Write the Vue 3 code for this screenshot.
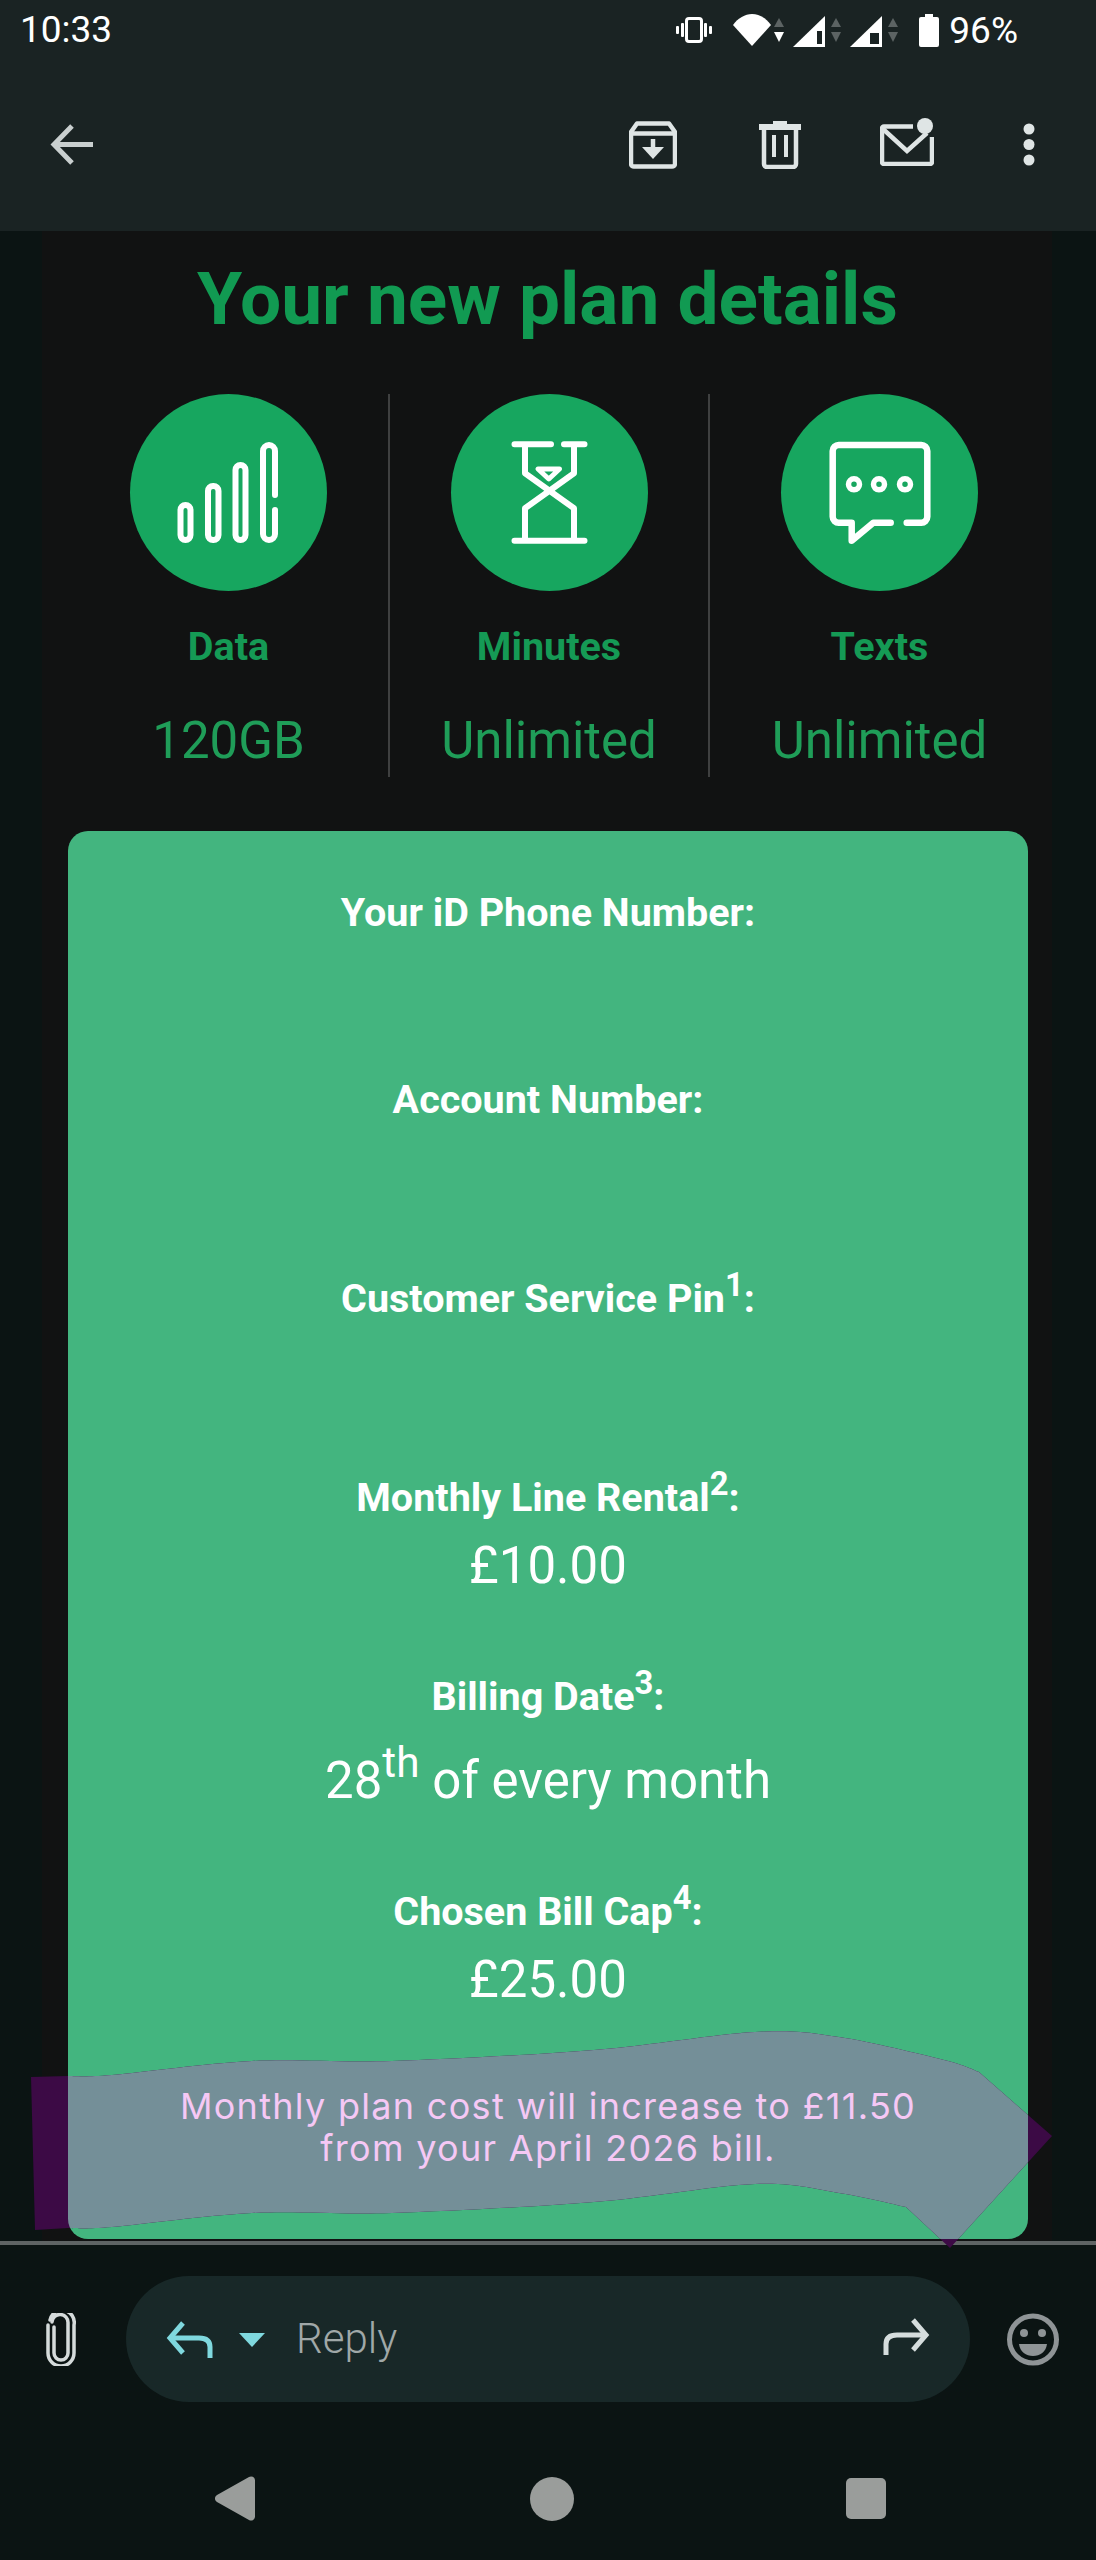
<template>
  <div class="screen">
    <header class="appbar">
      <div class="status">
        <span class="time">10:33</span>
        <div class="status-icons">
          <svg class="ic-vibrate" width="36" height="26" viewBox="0 0 36 26" fill="#fff">
            <rect x="10.500" y="1.500" width="15" height="23" rx="2.500" fill="none" stroke="#fff" stroke-width="3" />
            <rect x="5" y="6" width="3" height="14" rx="1" />
            <rect x="28" y="6" width="3" height="14" rx="1" />
            <rect x="0" y="9" width="3" height="8" rx="1" />
            <rect x="33" y="9" width="3" height="8" rx="1" />
          </svg>
          <svg class="ic-wifi" width="38" height="32" viewBox="0 0 38 32" fill="#fff">
            <path d="M0 11C5 4 12 0 19 0s14 4 19 11L19 32z" />
          </svg>
          <svg class="ic-updown first" width="10" height="24" viewBox="0 0 10 24">
            <path d="M5 0l5 9H0z" fill="#5c6363" />
            <path d="M0 14h10l-5 10z" fill="#fff" />
          </svg>
          <svg class="ic-signal" width="32" height="31" viewBox="0 0 32 31">
            <path d="M0 31L32 0v31z" fill="#fff" />
            <path d="M24 15h5v13h-5z" fill="#1a2323" />
          </svg>
          <svg class="ic-updown" width="10" height="24" viewBox="0 0 10 24">
            <path d="M5 0l5 9H0z" fill="#5c6363" />
            <path d="M0 14h10l-5 10z" fill="#5c6363" />
          </svg>
          <svg class="ic-signal" width="32" height="31" viewBox="0 0 32 31">
            <path d="M0 31L32 0v31z" fill="#fff" />
            <path d="M20 17h9v11h-9z" fill="#1a2323" />
          </svg>
          <svg class="ic-updown" width="10" height="24" viewBox="0 0 10 24">
            <path d="M5 0l5 9H0z" fill="#5c6363" />
            <path d="M0 14h10l-5 10z" fill="#5c6363" />
          </svg>
          <svg class="ic-battery" width="20" height="33" viewBox="0 0 20 33" fill="#fff">
            <path d="M6 0h8v3h4a2 2 0 0 1 2 2v26a2 2 0 0 1-2 2H2a2 2 0 0 1-2-2V5a2 2 0 0 1 2-2h4z" />
          </svg>
          <span class="battery-text">96%</span>
        </div>
      </div>
      <div class="toolbar">
        <svg width="43" height="41" viewBox="0 0 43 41" fill="none" stroke="#c9cfcf" stroke-width="5">
          <path d="M43 20.500H5M22 2L4 20.500 22 39" />
        </svg>
        <div class="tools">
          <svg class="tool-archive" width="48" height="48" viewBox="0 0 48 48" fill="none" stroke="#dfe5e5" stroke-width="4.500">
            <path d="M8 2.500h32l6 8.500v32a3 3 0 0 1-3 2.500H5a3 3 0 0 1-3-2.500V11z" stroke-linejoin="round" />
            <path d="M3 12.500h42" />
            <path d="M24 18v10" />
            <path d="M13 26h22L24 38z" fill="#dfe5e5" stroke="none" />
          </svg>
          <svg class="tool-trash" width="42" height="48" viewBox="0 0 42 48" fill="none" stroke="#dfe5e5" stroke-width="4.500">
            <path d="M14 0h14v3h14v6H0V3h14z" fill="#dfe5e5" stroke="none" />
            <path d="M5 8v35a3 3 0 0 0 3 3h26a3 3 0 0 0 3-3V8" />
            <path d="M15 14v22M27 14v22" stroke-width="4" />
          </svg>
          <svg class="tool-mail" width="54" height="48" viewBox="0 0 54 48" fill="none" stroke="#dfe5e5" stroke-width="4.500">
            <path d="M33 8.500H4a2 2 0 0 0-2 2V44a2 2 0 0 0 2 2h46a2 2 0 0 0 2-2V19" />
            <path d="M3 11l24 22 20-18" />
            <circle cx="45" cy="8" r="8" fill="#dfe5e5" stroke="none" />
          </svg>
          <svg class="tool-more" width="12" height="43" viewBox="0 0 12 43" fill="#dfe5e5">
            <circle cx="6" cy="6" r="5.500" />
            <circle cx="6" cy="21.500" r="5.500" />
            <circle cx="6" cy="37" r="5.500" />
          </svg>
        </div>
      </div>
    </header>

    <main class="mail">
      <h1 class="title">Your new plan details</h1>

      <section class="stats">
        <div class="stat">
          <div class="badge">
            <svg width="197" height="197" viewBox="0 0 197 197" fill="none" stroke="#fff" stroke-width="6">
              <rect x="50.500" y="111" width="10" height="35" rx="5" />
              <rect x="78" y="92" width="10.500" height="54" rx="5" />
              <rect x="105.500" y="71" width="10" height="75" rx="5" />
              <path d="M145 101V57a6 6 0 0 0-12 0v83a6 6 0 0 0 12 0v-24" stroke-linecap="round" />
            </svg>
          </div>
          <div class="stat-label">Data</div>
          <div class="stat-value">120GB</div>
        </div>
        <div class="stat">
          <div class="badge">
            <svg width="197" height="197" viewBox="0 0 197 197" fill="none" stroke="#fff" stroke-width="6" stroke-linecap="round" stroke-linejoin="round">
              <path d="M63.500 50.300H100M113 50.300h20.500M63.500 146.700h70" />
              <path d="M74 51v28.300L123 114.300V146M123 51v28.300L74 114.300V146" />
              <path d="M87 75h21.500L97.800 85z" stroke-width="5" />
            </svg>
          </div>
          <div class="stat-label">Minutes</div>
          <div class="stat-value">Unlimited</div>
        </div>
        <div class="stat">
          <div class="badge">
            <svg width="197" height="197" viewBox="0 0 197 197" fill="none" stroke="#fff" stroke-width="6.500" stroke-linecap="round" stroke-linejoin="round">
              <path d="M125.700 128.700H140a6 6 0 0 0 6.300-6V57a6 6 0 0 0-6.300-6H58a6 6 0 0 0-6.300 6v65.700a6 6 0 0 0 6.300 6h12.700v18L92.300 128.700h17.400" />
              <circle cx="73" cy="90.300" r="5.500" stroke-width="5.500" />
              <circle cx="98" cy="90.300" r="5.500" stroke-width="5.500" />
              <circle cx="124" cy="90.300" r="5.500" stroke-width="5.500" />
            </svg>
          </div>
          <div class="stat-label">Texts</div>
          <div class="stat-value">Unlimited</div>
        </div>
      </section>

      <section class="card">
        <div v-for="row in rows" :key="row.label" class="row" :class="row.cls">
          <div class="row-label">{{ row.label }}<sup v-if="row.note">{{ row.note }}</sup>:</div>
          <div class="row-value">{{ row.value }}<sup v-if="row.ord">{{ row.ord }}</sup>{{ row.rest }}</div>
        </div>
        <p class="notice">Monthly plan cost will increase to £11.50<br />from your April 2026 bill.</p>
      </section>
    </main>

    <footer class="bottom">
      <div class="composer">
        <svg class="clip" width="30" height="53" viewBox="0 0 30 53" fill="none" stroke="#d5dbdb" stroke-width="3.500" stroke-linecap="round">
          <path d="M8 14v26a7 7 0 0 0 14 0V10A8 8 0 0 0 6 9" />
          <path d="M2 12v28a13 13 0 0 0 26 0V12A12 12 0 0 0 4 7" />
        </svg>
        <div class="pill">
          <svg width="47" height="37" viewBox="0 0 47 37" fill="none" stroke="#7fd8de" stroke-width="5">
            <path d="M17 2L4 17l13 15" />
            <path d="M4 17h29q11 0 11 9v11" />
          </svg>
          <svg class="caret" width="26" height="14" viewBox="0 0 26 14" fill="#7fd8de">
            <path d="M0 0h26L13 14z" />
          </svg>
          <span class="reply">Reply</span>
          <svg class="forward" width="47" height="37" viewBox="0 0 47 37" fill="none" stroke="#d5dddd" stroke-width="5">
            <path d="M30 2l13 15-13 15" />
            <path d="M43 17H14Q3 17 3 26v11" />
          </svg>
        </div>
        <svg class="emoji" width="52" height="53" viewBox="0 0 52 53">
          <circle cx="26" cy="26.500" r="23.500" fill="none" stroke="#8f9496" stroke-width="5" />
          <circle cx="17" cy="20" r="4" fill="#8f9496" />
          <circle cx="35" cy="20" r="4" fill="#8f9496" />
          <path d="M12 31h28c-1 8-7 12-14 12s-13-4-14-12z" fill="#8f9496" />
        </svg>
      </div>
      <nav class="sysnav">
        <svg width="40" height="45" viewBox="0 0 40 45" fill="#9a9d9b">
          <path d="M34 1a4 4 0 0 1 6 3v37a4 4 0 0 1-6 3L2 26a4 4 0 0 1 0-7z" />
        </svg>
        <svg class="nav-home" width="44" height="44" viewBox="0 0 44 44" fill="#9a9d9b">
          <circle cx="22" cy="22" r="22" />
        </svg>
        <svg class="nav-recent" width="40" height="41" viewBox="0 0 40 41" fill="#9a9d9b">
          <rect width="40" height="41" rx="5" />
        </svg>
      </nav>
    </footer>

    <svg class="banner" width="1096" height="2560" viewBox="0 0 1096 2560">
      <defs>
        <clipPath id="card-clip">
          <rect x="68" y="831" width="960" height="1408" rx="20" />
        </clipPath>
      </defs>
      <path :d="bannerPath" fill="#3c0a45" />
      <path :d="bannerPath" fill="#748f98" clip-path="url(#card-clip)" />
    </svg>
  </div>
</template>

<script setup>
const rows = [
  { label: 'Your iD Phone Number', cls: 'first' },
  { label: 'Account Number' },
  { label: 'Customer Service Pin', note: '1' },
  { label: 'Monthly Line Rental', note: '2', value: '£10.00' },
  { label: 'Billing Date', note: '3', value: '28', ord: 'th', rest: ' of every month', cls: 'ordinal' },
  { label: 'Chosen Bill Cap', note: '4', value: '£25.00' }
]

// wavy edges of the banner, traced from the picture
const topEdge = [[68, 2076], [112, 2075], [252, 2061], [392, 2061], [594, 2050], [755, 2032], [839, 2037], [944, 2060], [979, 2072]]
const bottomEdge = [[906, 2207], [839, 2193], [755, 2184], [594, 2202], [392, 2213], [252, 2213], [112, 2227], [68, 2228]]

// catmull-rom through the points, as cubic segments
const smooth = (pts) => {
  let d = ''
  for (let i = 0; i < pts.length - 1; i++) {
    const p0 = pts[i - 1] || pts[i]
    const p1 = pts[i]
    const p2 = pts[i + 1]
    const p3 = pts[i + 2] || p2
    const c1 = [p1[0] + (p2[0] - p0[0]) / 6, p1[1] + (p2[1] - p0[1]) / 6]
    const c2 = [p2[0] - (p3[0] - p1[0]) / 6, p2[1] - (p3[1] - p1[1]) / 6]
    d += `C${c1[0]} ${c1[1]} ${c2[0]} ${c2[1]} ${p2[0]} ${p2[1]} `
  }
  return d
}

const bannerPath =
  'M31 2077 L68 2076 ' + smooth(topEdge) +
  'L1052 2136 L950 2248 L906 2207 ' + smooth(bottomEdge) +
  'L35 2230 Z'
</script>

<style>
html,
body {
  margin: 0;
  background: #0b1413;
}
</style>

<style scoped>
.screen {
  position: relative;
  width: 1096px;
  height: 2560px;
  display: flex;
  flex-direction: column;
  background: #0b1413;
  font-family: Roboto, "Liberation Sans", sans-serif;
  overflow: hidden;
}

.appbar {
  height: 231px;
  flex-shrink: 0;
  background: #1a2323;
}

.status {
  height: 60px;
  display: flex;
  align-items: center;
  justify-content: space-between;
  padding: 0 78px 0 20px;
  color: #fff;
}

.time {
  font-size: 37px;
  line-height: 60px;
}

.status-icons {
  display: flex;
  align-items: center;
}

.ic-wifi {
  margin-left: 21px;
}

.ic-updown {
  margin-left: 6px;
}

.ic-updown.first {
  margin-left: 3px;
}

.ic-signal {
  margin-left: 9px;
  margin-top: 3px;
}

.ic-battery {
  margin-left: 21px;
}

.battery-text {
  margin-left: 10px;
  font-size: 37px;
}

.toolbar {
  height: 171px;
  display: flex;
  align-items: center;
  justify-content: space-between;
  padding: 0 61px 0 50px;
  margin-top: -1px;
}

.tools {
  display: flex;
  align-items: center;
}

.tool-trash {
  margin-left: 82px;
}

.tool-mail {
  margin-left: 79px;
  margin-top: -6px;
}

.tool-more {
  margin-left: 89px;
}

.mail {
  height: 2010px;
  flex-shrink: 0;
  box-sizing: border-box;
  margin: 0 44px 0 42px;
  padding-top: 26px;
  background: #111212;
  overflow: hidden;
}

.title {
  margin: 0;
  font-size: 73px;
  line-height: 84px;
  font-weight: 700;
  text-align: center;
  color: #119a52;
  padding-left: 1px;
}

.stats {
  display: grid;
  grid-template-columns: 319px 320px 341px;
  margin: 53px 0 0 27px;
}

.stat {
  box-sizing: border-box;
  height: 383px;
  text-align: center;
  display: flex;
  flex-direction: column;
  align-items: center;
}

.stat + .stat {
  border-left: 2px solid #3f4040;
}

.badge {
  width: 197px;
  height: 197px;
  border-radius: 50%;
  background: #17a65f;
}

.badge svg {
  display: block;
}

.stat-label {
  margin-top: 33px;
  font-size: 39.500px;
  line-height: 46px;
  font-weight: 700;
  color: #159a55;
}

.stat-value {
  margin-top: 41px;
  font-size: 51px;
  line-height: 60px;
  font-weight: 400;
  color: #1f9d58;
}

.card {
  box-sizing: border-box;
  height: 1408px;
  margin: 54px 24px 0 26px;
  padding-top: 59px;
  border-radius: 20px;
  background: #43b57f;
  color: #fff;
  text-align: center;
}

.row + .row {
  margin-top: 78px;
}

.row-label {
  font-size: 39.500px;
  line-height: 46px;
  font-weight: 700;
}

.row-value {
  margin-top: 15px;
  height: 60px;
  font-size: 51px;
  line-height: 60px;
}

.row.first .row-value {
  margin-top: 3px;
}

.row.ordinal .row-value {
  margin-top: 31px;
}

sup {
  font-size: 0.83em;
  line-height: 0;
  vertical-align: baseline;
  position: relative;
  top: -0.5em;
  font-weight: inherit;
}

.notice {
  position: relative;
  z-index: 3;
  margin: 75px 0 0;
  font-family: Inter, sans-serif;
  font-size: 36px;
  letter-spacing: 1.300px;
  line-height: 42px;
  color: #f5c8f5;
}

.bottom {
  flex: 1;
  border-top: 4px solid #5f6464;
}

.composer {
  display: flex;
  align-items: center;
  height: 126px;
  margin-top: 31px;
}

.clip {
  margin-left: 46px;
}

.pill {
  width: 844px;
  height: 126px;
  margin-left: 50px;
  border-radius: 63px;
  background: #182828;
  display: flex;
  align-items: center;
  padding-left: 40px;
  box-sizing: border-box;
}

.caret {
  margin-left: 26px;
  margin-top: 2px;
}

.reply {
  margin-left: 31px;
  font-size: 42px;
  font-weight: 300;
  color: #a0a8a8;
  margin-top: -2px;
}

.forward {
  margin-left: auto;
  margin-right: 40px;
  margin-top: -6px;
}

.emoji {
  margin-left: 37px;
}

.sysnav {
  display: flex;
  align-items: center;
  height: 45px;
  margin-top: 74px;
  padding-left: 215px;
}

.nav-home {
  margin-left: 275px;
}

.nav-recent {
  margin-left: 272px;
}

.banner {
  position: absolute;
  left: 0;
  top: 0;
  z-index: 2;
  pointer-events: none;
}
</style>
